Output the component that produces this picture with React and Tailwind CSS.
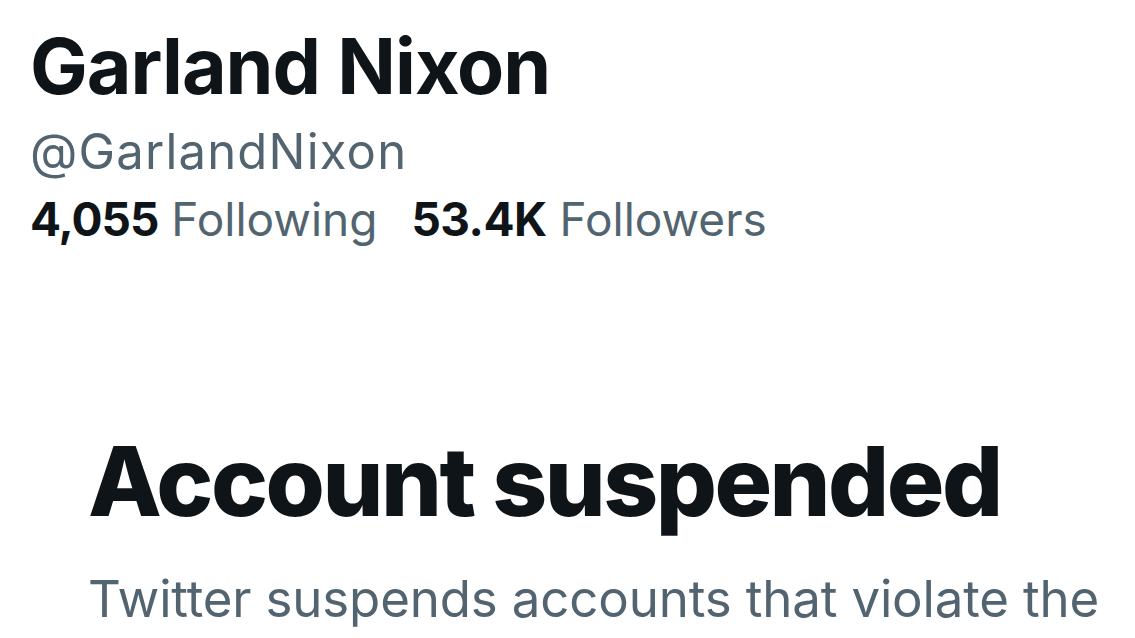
import React from "react";

const App = () => {
  return (
    <div className="h-[638px] w-[1135px] overflow-hidden bg-white font-['Inter',sans-serif] text-[#0f1419]">
      {/* Profile header */}
      <div className="pl-[30px] pt-[28px]">
        <h1 className="text-[77px] font-bold leading-[77px] tracking-[-1px]">Garland Nixon</h1>
        <div className="mt-[22px] text-[49px] leading-[49px] tracking-[1.2px] text-[#536471]">@GarlandNixon</div>
        <div className="mt-[20px] flex text-[46px] leading-[46px]">
          <span>
            <span className="font-bold tracking-[-1px]">4,055</span> <span className="text-[#536471]">Following</span>
          </span>
          <span className="ml-[34px]">
            <span className="font-bold tracking-[-0.5px]">53.4K</span> <span className="text-[#536471]">Followers</span>
          </span>
        </div>
      </div>

      {/* Suspended notice */}
      <div className="mt-[191px] pl-[88px]">
        <h2 className="text-[96px] font-extrabold leading-[96px] tracking-[-2.5px]">Account suspended</h2>
        <p className="mt-[37px] whitespace-nowrap text-[51px] leading-[66px] tracking-[-0.15px] text-[#536471]">
          Twitter suspends accounts that violate the
        </p>
      </div>
    </div>
  );
};

export default App;
